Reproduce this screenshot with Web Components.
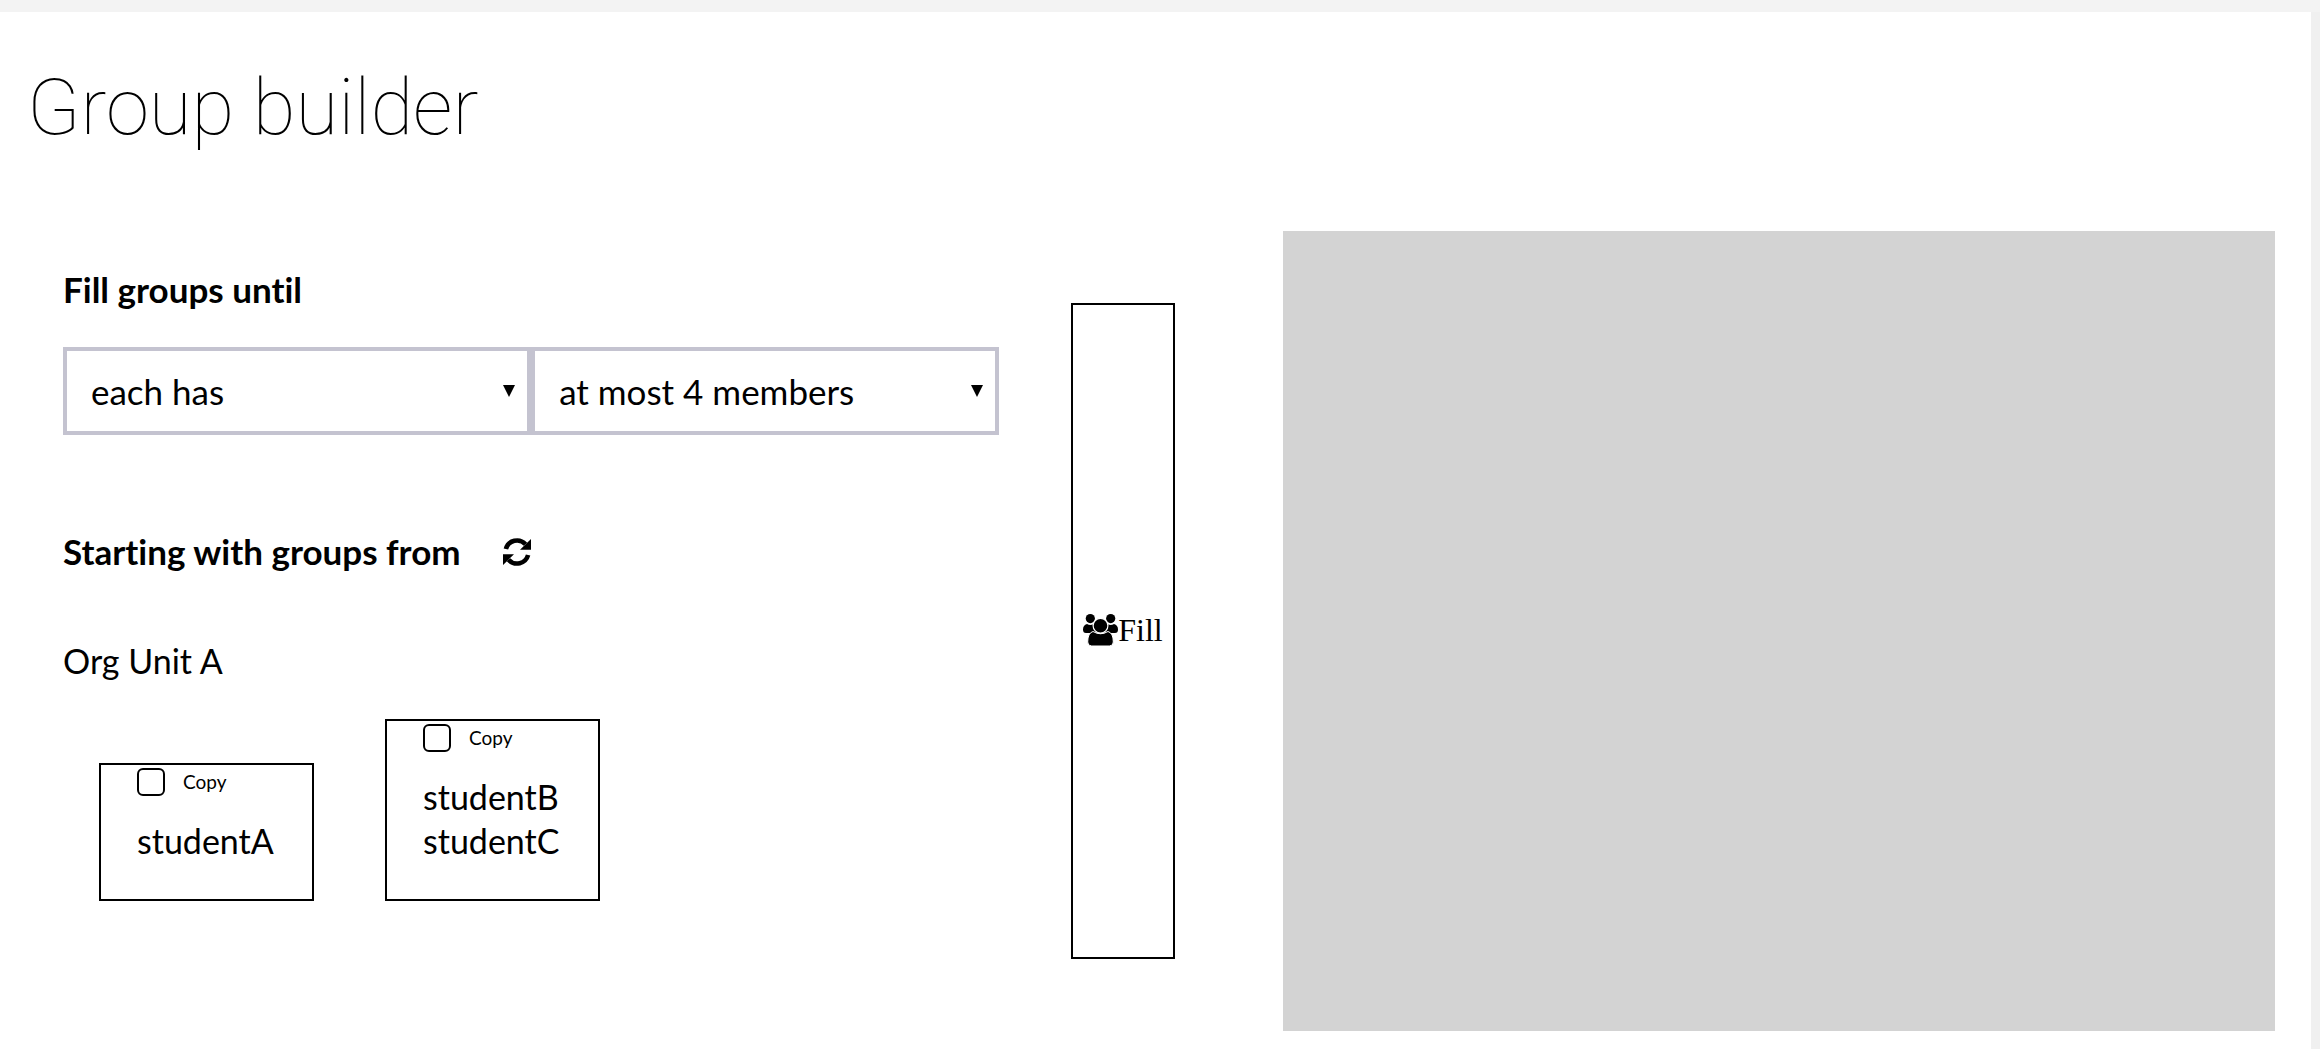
<!DOCTYPE html>
<html lang="en">
<head>
<meta charset="utf-8">
<title>Group builder</title>
<style>
  html { height: 100%; background: #f0f0f0; }
  body { margin: 0; min-height: 100%; display: flex; color: #000; font: 34px/44px Lato, sans-serif; font-variant-ligatures: none; }
  group-builder { flex: 1; }
</style>
</head>
<body>
<group-builder>
  <page-title slot="title">Group builder</page-title>
  <labelled-section slot="rules" heading="Fill groups until">
    <option-row>
      <option-select label="Condition" value="each has"></option-select>
      <option-select label="Limit" value="at most 4 members"></option-select>
    </option-row>
  </labelled-section>
  <labelled-section slot="rules" heading="Starting with groups from">
    <refresh-button slot="action"></refresh-button>
    <org-unit name="Org Unit A">
      <group-card><li>studentA</li></group-card>
      <group-card><li>studentB</li><li>studentC</li></group-card>
    </org-unit>
  </labelled-section>
  <fill-button slot="action">Fill</fill-button>
</group-builder>

<script>
const define = (name, markup, setup) => customElements.define(name, class extends HTMLElement {
  constructor() {
    super();
    const template = document.createElement('template');
    template.innerHTML = markup;
    this.attachShadow({ mode: 'open' }).append(template.content.cloneNode(true));
  }
  connectedCallback() { if (setup) setup(this, this.shadowRoot); }
});

define('group-builder', `
  <style>
    :host { display: flex; flex-direction: column; }
    header { height: 12px; background: #f3f3f3; }
    main { flex: 1; margin-right: 9px; padding: 40px 36px 18px 27px; background: #fff; }
    .columns { display: grid; grid-template-columns: minmax(0, 972fr) auto minmax(0, 992fr); margin-top: 67px; }
    .rules { display: flex; flex-direction: column; gap: 94px; padding: 36px 0 36px 36px; }
    .action { display: flex; padding: 72px 108px 72px 72px; }
    .result { min-height: 800px; background: #d3d3d3; }
  </style>
  <header></header>
  <main>
    <slot name="title"></slot>
    <div class="columns">
      <div class="rules"><slot name="rules"></slot></div>
      <div class="action"><slot name="action"></slot></div>
      <section class="result" aria-label="Filled groups"></section>
    </div>
  </main>`);

define('page-title', `
  <style>
    :host { display: block; }
    h1 { margin: 0; font: 100 78px/112px Roboto, sans-serif; }
  </style>
  <h1><slot></slot></h1>`);

define('labelled-section', `
  <style>
    :host { display: block; }
    .head { display: flex; align-items: center; gap: 42px; }
    h2 { margin: 0; font-size: 35px; line-height: 44px; font-weight: 700; }
  </style>
  <div class="head"><h2></h2><slot name="action"></slot></div>
  <slot></slot>`,
  (host, root) => { root.querySelector('h2').textContent = host.getAttribute('heading'); });

define('option-row', `
  <style>:host { display: flex; margin-top: 36px; }</style>
  <slot></slot>`);

define('option-select', `
  <style>
    :host { display: grid; flex: 1; align-items: center; font-size: 35px; }
    select, svg { grid-area: 1 / 1; }
    select { appearance: none; box-sizing: border-box; width: 100%; height: 88px; margin: 0; padding: 0 40px 0 24px;
      border: 4px solid #c4c3d0; border-radius: 0; background: #fff; color: inherit; font: inherit; }
    svg { justify-self: end; width: 12px; height: 12px; margin-right: 16px; pointer-events: none; }
  </style>
  <select><option></option></select>
  <svg viewBox="0 0 12 12" aria-hidden="true"><path d="M0 0h12L6 12z"/></svg>`,
  (host, root) => {
    root.querySelector('select').setAttribute('aria-label', host.getAttribute('label'));
    root.querySelector('option').textContent = host.getAttribute('value');
  });

define('refresh-button', `
  <style>
    :host { display: flex; }
    button { display: flex; margin: 2px 0 0; padding: 0; border: 0; background: none; color: inherit; }
    svg { width: 28px; height: 28px; }
  </style>
  <button aria-label="Refresh"><svg viewBox="0 0 28 28" aria-hidden="true">
    <path d="M2.900 11A11.500 11.500 0 0 1 22.500 6.300M25.100 17A11.500 11.500 0 0 1 5.500 21.700" fill="none" stroke="currentColor" stroke-width="4.600"/>
    <path d="M28 1v10.800H17zM0 27V16.200h11z"/>
  </svg></button>`);

define('org-unit', `
  <style>
    :host { display: block; margin-top: 66px; }
    h3 { margin: 0; font: inherit; }
    .groups { display: flex; flex-wrap: wrap; align-items: flex-end; gap: 71px; margin: 36px 36px 0; }
  </style>
  <h3></h3>
  <div class="groups"><slot></slot></div>`,
  (host, root) => { root.querySelector('h3').textContent = host.getAttribute('name'); });

define('group-card', `
  <style>
    :host { display: block; box-sizing: border-box; min-width: 215px; padding: 0 36px; border: 2px solid #000; }
    label { display: flex; align-items: center; gap: 18px; height: 33px; font-size: 19px; line-height: 24px; }
    input { appearance: none; box-sizing: border-box; width: 28px; height: 28px; margin: 0; border: 2px solid #000; border-radius: 6px; background: #fff; }
    input:checked { background: #000; }
    ul { list-style: none; margin: 21px 0 36px; padding: 0; }
  </style>
  <label><input type="checkbox">Copy</label>
  <ul><slot></slot></ul>`);

define('fill-button', `
  <style>
    :host { display: flex; }
    button { display: flex; align-items: center; margin: 0; padding: 0 10px 2px; border: 2px solid #000; background: #fff; color: inherit;
      font: 32px/36px "Liberation Serif", serif; }
    svg { width: 35px; height: 32px; }
  </style>
  <button><svg viewBox="0 0 35 32" aria-hidden="true">
    <circle cx="7.300" cy="4.600" r="4.600"/><circle cx="27.700" cy="4.600" r="4.600"/>
    <path d="M4 10q3.300 2 6.600 0 0 5 3 9H3Q0 19 0 15.500 0 11 4 10zM31 10q-3.300 2-6.600 0 0 5-3 9H32q3 0 3-3.500 0-4.500-4-5.500z"/>
    <path d="M10 17.500q7.500 4.500 15 0 5.300 1.500 5.300 10.500 0 4-4 4H8.700q-4 0-4-4 0-9 5.300-10.500z" stroke="#fff" stroke-width="1"/>
    <circle cx="17.500" cy="11.700" r="7.400" stroke="#fff" stroke-width="1.200"/>
  </svg><slot></slot></button>`);
</script>
</body>
</html>
